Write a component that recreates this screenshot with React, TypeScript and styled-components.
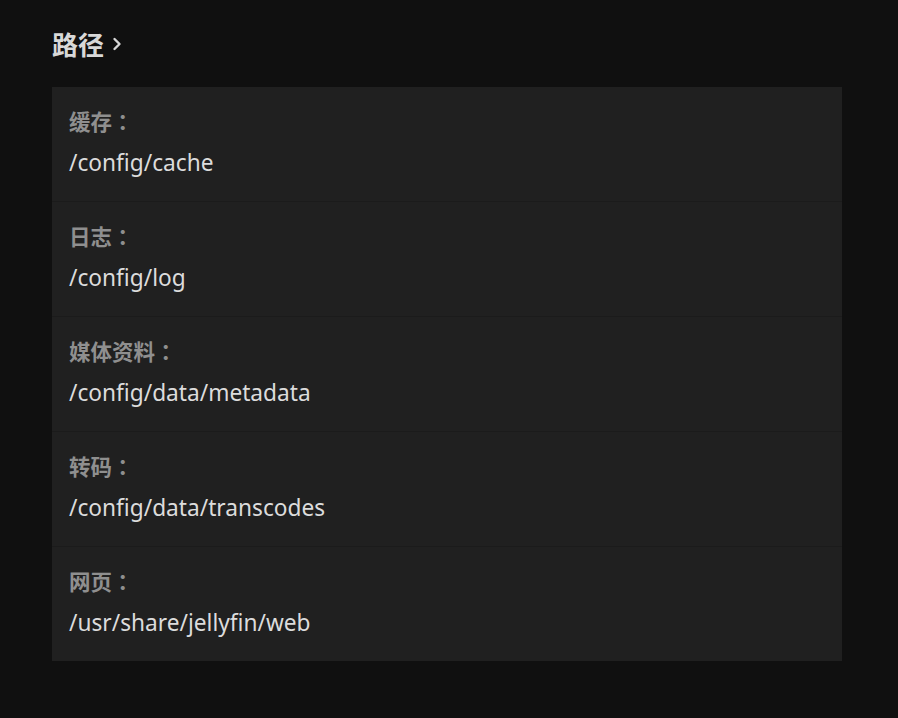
import styled, { createGlobalStyle } from "styled-components";

const GlobalStyle = createGlobalStyle`
  html, body {
    margin: 0;
    padding: 0;
    background: #101010;
    font-family: "Noto Sans", "Noto Sans CJK SC", sans-serif;
  }
`;

const Page = styled.div`
  padding: 23px 56px 0 52px;
`;

const Heading = styled.h2`
  margin: 0 0 24px 0;
  height: 40px;
  display: flex;
  align-items: center;
  gap: 8px;
  font-family: "Noto Sans CJK SC", sans-serif;
  font-size: 26px;
  font-weight: 700;
  color: #d8d8d8;
`;

const Chevron = styled.svg`
  width: 10px;
  height: 16px;
  margin-top: 1px;
`;

const Card = styled.div`
  width: 790px;
  background: #202020;
  display: flex;
  flex-direction: column;
`;

const Row = styled.div`
  height: 94px;
  padding: 20px 17px 0 17px;
  border-bottom: 1px solid #1b1b1b;
  &:last-child {
    border-bottom: none;
  }
`;

const Label = styled.div`
  font-family: "Noto Sans CJK SC", sans-serif;
  font-size: 21.5px;
  line-height: 28px;
  font-weight: 700;
  color: #8f8f8f;
  text-spacing-trim: space-all;
`;

const Colon = styled.span`
  font-family: "Noto Sans CJK JP", sans-serif;
`;

const Value = styled.div`
  margin-top: 14px;
  font-size: 22.7px;
  line-height: 28px;
  color: #dcdcdc;
`;

const paths = [
  { label: "缓存", value: "/config/cache" },
  { label: "日志", value: "/config/log" },
  { label: "媒体资料", value: "/config/data/metadata" },
  { label: "转码", value: "/config/data/transcodes" },
  { label: "网页", value: "/usr/share/jellyfin/web" }
];

const App = () => (
  <Page>
    <GlobalStyle />
    <Heading>
      路径
      <Chevron viewBox="0 0 10 16" fill="none" stroke="#d8d8d8" strokeWidth="2.4" strokeLinecap="round" strokeLinejoin="round">
        <path d="M2.5 3 L7.5 8 L2.5 13" />
      </Chevron>
    </Heading>
    <Card>
      {paths.map(p => (
        <Row key={p.label}>
          <Label>
            {p.label}
            <Colon>：</Colon>
          </Label>
          <Value>{p.value}</Value>
        </Row>
      ))}
    </Card>
  </Page>
);

export default App;
